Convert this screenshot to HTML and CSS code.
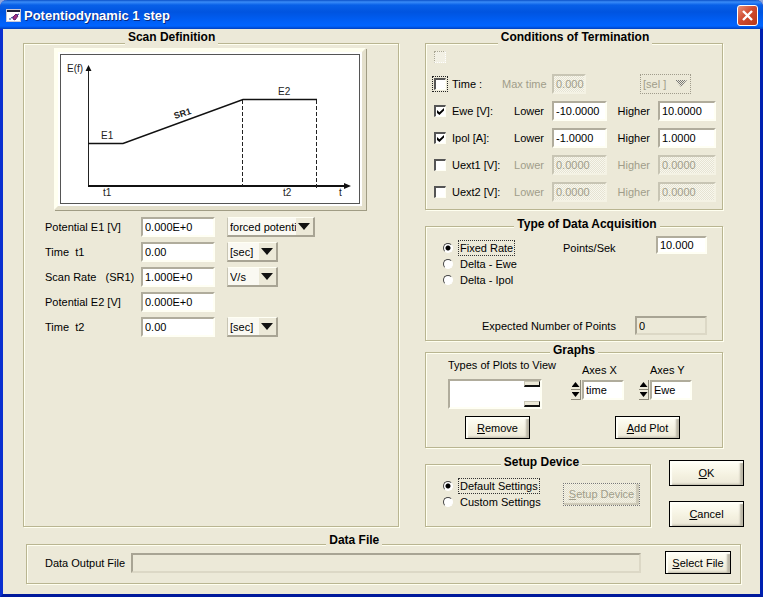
FILE: index.html
```html
<!DOCTYPE html>
<html lang="en">
<head>
  <meta charset="UTF-8">
  <meta name="viewport" content="width=device-width, initial-scale=1.0">
  <title>Potentiodynamic 1 step</title>
  <link rel="stylesheet" href="styles.css">
</head>
<body>
  <div class="window">
    <header class="titlebar">
      <svg class="app-icon" width="16" height="14" viewBox="0 0 16 14">
        <rect x="0.5" y="0.5" width="14" height="12" fill="#fff" stroke="#c8c8d8"/>
        <path d="M1 2h13" stroke="#223" stroke-width="2"/>
        <path d="M7 8l3-3 2 2-3 4-2-1z" fill="#a03080" stroke="#602070"/>
        <path d="M3 10h2M5 9l2-1M11 6l2-1" stroke="#203090"/>
      </svg>
      <h1>Potentiodynamic 1 step</h1>
      <button type="button" class="close" aria-label="Close">
        <svg width="17" height="17" viewBox="0 0 17 17"><path d="M4 4l9 9M13 4l-9 9" stroke="#fff" stroke-width="2.4"/></svg>
      </button>
    </header>

    <form class="content">
      <div class="columns">
        <fieldset class="scan tall-legend">
          <legend>Scan Definition</legend>
          <div class="picture">
            <svg viewBox="0 0 304 154" role="img" aria-label="Scan profile">
              <rect x="2.5" y="2.5" width="299" height="149" fill="#fff" stroke="#555"/>
              <path d="M30.5 17v117" stroke="#222"/>
              <path d="M30 134h256" stroke="#111" stroke-width="2"/>
              <path d="M30.5 13l3 6h-6zM293 134l-7-3v6z" fill="#111"/>
              <path d="M30 91.500H65L185 47.500H259" fill="none" stroke="#111" stroke-width="1.500"/>
              <path d="M184.500 48v86M258.500 48v88" stroke="#222" stroke-dasharray="4 2"/>
              <g font-size="10" fill="#222">
                <text x="9" y="20">E(f)</text>
                <text x="43" y="87">E1</text>
                <text x="220" y="43">E2</text>
                <text x="45" y="144">t1</text>
                <text x="225" y="144">t2</text>
                <text x="281" y="144">t</text>
                <text transform="translate(117 67) rotate(-18)" font-size="9" font-weight="bold">SR1</text>
              </g>
            </svg>
          </div>
          <div class="params">
            <label for="e1">Potential E1 [V]</label>
            <input type="text" id="e1" value="0.000E+0">
            <span class="drop wide"><select aria-label="E1 mode"><option>forced potential</option></select></span>

            <label for="t1">Time  t1</label>
            <input type="text" id="t1" value="0.00">
            <span class="drop"><select aria-label="t1 unit"><option>[sec]</option></select></span>

            <label for="sr1">Scan Rate   (SR1)</label>
            <input type="text" id="sr1" value="1.000E+0">
            <span class="drop"><select aria-label="Scan rate unit"><option>V/s</option></select></span>

            <label for="e2">Potential E2 [V]</label>
            <input type="text" id="e2" value="0.000E+0">
            <span></span>

            <label for="t2">Time  t2</label>
            <input type="text" id="t2" value="0.00">
            <span class="drop"><select aria-label="t2 unit"><option>[sec]</option></select></span>
          </div>
        </fieldset>

        <div class="side">
          <fieldset class="termination tall-legend">
            <legend>Conditions of Termination</legend>
            <div class="conditions">
              <div class="condition">
                <input type="checkbox" aria-label="Unused condition" disabled>
              </div>
              <div class="condition">
                <input type="checkbox" id="useTime" class="focused">
                <label for="useTime">Time :</label>
                <label class="low off" for="maxTime">Max time</label>
                <input type="text" id="maxTime" class="short" value="0.000" disabled>
                <span class="drop unit"><select aria-label="Max time unit" disabled><option>[sel ]</option></select></span>
              </div>
              <div class="condition">
                <input type="checkbox" id="useEwe" checked>
                <label for="useEwe">Ewe [V]:</label>
                <label class="low" for="eweLow">Lower</label>
                <input type="text" id="eweLow" value="-10.0000">
                <label class="high" for="eweHigh">Higher</label>
                <input type="text" id="eweHigh" value="10.0000">
              </div>
              <div class="condition">
                <input type="checkbox" id="useIpol" checked>
                <label for="useIpol">Ipol [A]:</label>
                <label class="low" for="ipolLow">Lower</label>
                <input type="text" id="ipolLow" value="-1.0000">
                <label class="high" for="ipolHigh">Higher</label>
                <input type="text" id="ipolHigh" value="1.0000">
              </div>
              <div class="condition">
                <input type="checkbox" id="useUext1">
                <label for="useUext1">Uext1 [V]:</label>
                <label class="low off" for="uext1Low">Lower</label>
                <input type="text" id="uext1Low" value="0.0000" disabled>
                <label class="high off" for="uext1High">Higher</label>
                <input type="text" id="uext1High" value="0.0000" disabled>
              </div>
              <div class="condition">
                <input type="checkbox" id="useUext2">
                <label for="useUext2">Uext2 [V]:</label>
                <label class="low off" for="uext2Low">Lower</label>
                <input type="text" id="uext2Low" value="0.0000" disabled>
                <label class="high off" for="uext2High">Higher</label>
                <input type="text" id="uext2High" value="0.0000" disabled>
              </div>
            </div>
          </fieldset>

          <fieldset class="acquisition">
            <legend>Type of Data Acquisition</legend>
            <div class="rate">
              <div class="radios">
                <label><input type="radio" name="rate" checked><span class="focused">Fixed Rate</span></label>
                <label><input type="radio" name="rate"><span>Delta - Ewe</span></label>
                <label><input type="radio" name="rate"><span>Delta - Ipol</span></label>
              </div>
              <label class="points" for="points">Points/Sek</label>
              <input type="text" id="points" value="10.000">
            </div>
            <div class="expected">
              <label for="expected">Expected Number of Points</label>
              <input type="text" id="expected" class="readout" value="0" readonly>
            </div>
          </fieldset>

          <fieldset class="graphs">
            <legend>Graphs</legend>
            <div class="plots">
              <div class="plot-list">
                <label for="plots">Types of Plots to View</label>
                <div class="list">
                  <select id="plots" size="2"></select>
                  <span class="scroll"><i></i><i></i></span>
                </div>
              </div>
              <div class="axis">
                <label for="axisX">Axes X</label>
                <div class="spinner">
                  <span class="arrows">
                    <button type="button" aria-label="Previous X axis"></button>
                    <button type="button" class="down" aria-label="Next X axis"></button>
                  </span>
                  <input type="text" id="axisX" value="time">
                </div>
              </div>
              <div class="axis">
                <label for="axisY">Axes Y</label>
                <div class="spinner">
                  <span class="arrows">
                    <button type="button" aria-label="Previous Y axis"></button>
                    <button type="button" class="down" aria-label="Next Y axis"></button>
                  </span>
                  <input type="text" id="axisY" value="Ewe">
                </div>
              </div>
            </div>
            <div class="plot-buttons">
              <button type="button" class="btn"><u>R</u>emove</button>
              <button type="button" class="btn"><u>A</u>dd Plot</button>
            </div>
          </fieldset>

          <div class="bottom">
            <fieldset class="device">
              <legend>Setup Device</legend>
              <div class="device-row">
                <div class="radios">
                  <label><input type="radio" name="settings" checked><span class="focused">Default Settings</span></label>
                  <label><input type="radio" name="settings"><span>Custom Settings</span></label>
                </div>
                <button type="button" class="btn" disabled><u>S</u>etup Device</button>
              </div>
            </fieldset>
            <div class="actions">
              <button type="submit" class="btn"><u>O</u>K</button>
              <button type="button" class="btn"><u>C</u>ancel</button>
            </div>
          </div>
        </div>
      </div>

      <fieldset class="datafile">
        <legend>Data File</legend>
        <div class="file-row">
          <label for="outfile">Data Output File</label>
          <input type="text" id="outfile" class="readout" readonly>
          <button type="button" class="btn"><u>S</u>elect File</button>
        </div>
      </fieldset>
    </form>
  </div>
</body>
</html>
```
FILE: styles.css
```css
* { margin:0; padding:0; box-sizing:border-box }
body {
  background:#8fa6dc; color:#000;
  font:11px/14px "Liberation Sans", Arial, sans-serif;
}
input, select, button { font:inherit; color:inherit; border-radius:0; }
label { white-space:pre; }

.window {
  min-height:100vh;
  display:flex; flex-direction:column;
  background:#ece9d8;
  border:3px solid #0a2fd0; border-top:none; border-bottom-color:#001a9c; border-right-color:#0020b0;
  border-radius:7px 7px 0 0;
}

/* title bar */
.titlebar {
  height:29px; margin:0 -3px; padding:2px 5px 0 6px;
  display:flex; align-items:center; gap:2px;
  border-radius:7px 7px 0 0;
  background:linear-gradient(#0a50c8 0, #3a8cf8 2px, #0860e8 5px, #0054e0 12px, #0060f8 22px, #0064ff 26px, #0040c0 29px);
}
.titlebar h1 {
  flex:1; color:#fff; font-size:13px; line-height:16px;
  text-shadow:1px 1px 0 #0a2a80;
}
.close {
  width:21px; height:21px; display:grid; place-items:center;
  border:1px solid #fff; border-radius:3px;
  background:linear-gradient(135deg, #e89078, #d04c30 45%, #b83818);
}

.content { flex:1; padding:1px 16px 9px 20px; }
.columns { display:grid; grid-template-columns:376fr 319fr; gap:26px; }
.side { display:flex; flex-direction:column; min-width:0; }

/* group boxes */
fieldset {
  min-width:0; border:1px solid #b9b591;
  box-shadow:inset 1px 1px 0 #fffff0, 1px 1px 0 #fffff0;
}
legend {
  margin:0 auto; padding:0 3px 4px;
  background:#ece9d8; font-size:12px; line-height:14px; font-weight:bold;
}
.tall-legend legend { padding-bottom:12px; }

/* fields */
input[type=text] {
  width:100%; min-width:0; height:20px; padding:0 0 0 2px;
  background:#fff; outline:none;
  border:2px solid #fffff4; border-top-color:#b0ac9c; border-left-color:#b0ac9c;
}
input[type=text]:disabled {
  color:#a09d8a; border-color:#f4f2e4; border-top-color:#c8c5b4; border-left-color:#c8c5b4;
  background:repeating-conic-gradient(#f8f7ee 0 25%, #e6e3d2 0 50%) 0 0 / 2px 2px;
}
input.readout, input.readout[type=text] {
  background:#ece9d8; border-color:#dcd8c6; border-top-color:#a8a494; border-left-color:#a8a494;
}
.off { color:#a09d8a; }

.drop {
  position:relative; display:block; width:51px; height:20px;
  border:2px solid #a8a494; border-top:1px solid #fffff4; border-left:1px solid #c8c5b4;
}
.drop.wide { width:88px; }
.drop select {
  width:100%; height:100%; display:block; padding:0 17px 0 2px; appearance:none; border:none;
  background:linear-gradient(90deg, #faf9f2 calc(100% - 17px), #ece9d8 0);
  overflow:hidden; text-overflow:clip;
}
.drop::after {
  content:""; position:absolute; right:3px; top:5px; width:12px; height:7px;
  background:#111; clip-path:polygon(0 0, 100% 0, 50% 100%); pointer-events:none;
}
.drop select:disabled { color:#a09d8a; opacity:1; background:#ece9d8; }
.drop:has(select:disabled) { border:1px dotted #a09c8c; }
.drop:has(select:disabled)::after { background:repeating-conic-gradient(#777 0 25%, #ece9d8 0 50%) 0 0 / 2px 2px; }

input[type=checkbox] {
  width:12px; height:12px; appearance:none; background:#fff;
  border:1px solid #fffff4; border-top:2px solid #555; border-left:2px solid #555;
  display:grid; place-items:center;
}
input[type=checkbox]:checked::after {
  content:""; width:7px; height:7px; background:#000;
  clip-path:polygon(0 30%, 35% 60%, 100% 0, 100% 35%, 35% 100%, 0 70%);
}
input[type=checkbox]:disabled { background:#f2f0e4; border:1px dotted #aaa794; border-right-color:#fff; border-bottom-color:#fff; }
input[type=checkbox].focused { outline:1px dotted #222; outline-offset:1px; }

.radios { display:flex; flex-direction:column; align-items:flex-start; }
.radios label { height:16px; display:flex; align-items:center; gap:6px; }
.radios span { padding:0 1px; }
.radios .focused { outline:1px dotted #333; }
input[type=radio] {
  width:10px; height:10px; appearance:none; border-radius:50%; background:#fff;
  border:1px solid #fff; border-top-color:#444; border-left-color:#444;
}
input[type=radio]:checked { background:radial-gradient(#000 2px, #fff 3px); }

.btn {
  height:23px; border:1px solid #000; background:linear-gradient(#fffff6, #f4f1e0 60%, #ece8d8);
  box-shadow:inset 2px 2px 1px #fffff8, inset -3px -1px 2px #bab6a6;
}
.btn:disabled {
  color:#a09d8a; border:1px dotted #777;
  background:repeating-conic-gradient(#f4f2e4 0 25%, #e4e1d0 0 50%) 0 0 / 2px 2px;
  box-shadow:inset -3px -2px 1px #ccc8b6;
}

/* scan definition */
.scan { padding:0 20px 0 21px; }
.scan legend { margin-left:24%; }
.picture {
  max-width:312px; margin:-8px 0 7px 9px; background:#fff;
  border:4px solid #fffff0; border-right-color:#e4e0cc; border-bottom-color:#e4e0cc;
  box-shadow:1px 1px 0 #a09c84;
}
.picture svg { display:block; width:100%; }
.params {
  display:grid; grid-template-columns:84px 74px auto; align-items:center;
  gap:5px 12px; grid-auto-rows:20px;
}

/* conditions */
.termination { margin-right:21px; padding:0 6px 7px 8px; }
.conditions { display:grid; gap:7px; margin-top:-9px; }
.condition {
  height:20px; display:grid; align-items:center;
  grid-template-columns:18px 50px 50px 55px 51px 1fr;
}
.condition .low { text-align:right; padding-right:8px; }
.condition .high { text-align:right; padding-right:8px; }
.condition .short { width:34px; }
.condition .unit { margin-left:33px; }

/* data acquisition */
.acquisition { margin:7px 21px 0 0; padding:1px 15px 5px 17px; }
.acquisition legend { margin-left:27%; }
.rate { display:grid; grid-template-columns:120px 93px 1fr; align-items:start; }
.rate .radios { padding-top:4px; }
.rate .points { padding-top:4px; line-height:16px; }
.rate input[type=text] { height:18px; }
.expected { display:grid; grid-template-columns:153px 1fr; align-items:center; margin-top:28px; padding-left:39px; }
.expected input[type=text] { height:19px; }

/* graphs */
.graphs { margin:2px 21px 0 0; padding:0 22px 8px 22px; }
.plots { display:grid; grid-template-columns:123px 68px 1fr; align-items:start; }
.plot-list { margin-top:-3px; }
.list {
  position:relative; width:94px; height:30px; margin-top:7px;
  border:2px solid #fffff4; border-top-color:#b0ac9c; border-left-color:#b0ac9c;
}
.list select { display:block; width:100%; height:100%; appearance:none; border:none; background:#fff; }
.scroll {
  position:absolute; top:0; right:0; bottom:0; width:16px;
  display:flex; flex-direction:column; justify-content:space-between;
}
.scroll i { height:6px; background:#ece9d8; border:1px solid #c8c5b4; border-bottom:2px solid #111; border-right-color:#111; }
.axis { margin-top:2px; }
.axis label { display:block; padding-left:11px; }
.spinner { display:flex; gap:1px; margin-top:3px; }
.spinner input[type=text] { width:42px; }
.arrows { display:flex; flex-direction:column; }
.arrows button {
  width:10px; height:10px; display:grid; place-items:center;
  background:#ece9d8; border:none; border-right:1px solid #8c8878; border-bottom:1px solid #8c8878;
}
.arrows button::after { content:""; width:8px; height:5px; background:#000; clip-path:polygon(50% 0, 100% 100%, 0 100%); }
.arrows .down::after { clip-path:polygon(0 0, 100% 0, 50% 100%); }
.plot-buttons { display:flex; justify-content:space-between; margin-top:7px; padding:0 20px 0 17px; }
.plot-buttons .btn { width:65px; }

/* setup device, ok and cancel */
.bottom { display:flex; gap:18px; margin-top:7px; }
.device { flex:1; padding:5px 10px 16px 17px; }
.device-row { display:flex; justify-content:space-between; align-items:center; }
.device .btn { width:77px; }
.actions { width:75px; display:flex; flex-direction:column; justify-content:space-between; padding-top:5px; }
.actions .btn { height:26px; }

/* data file */
.datafile { margin:6px 3px 0; padding:0 9px 9px 18px; }
.datafile legend { margin-left:41%; padding-bottom:8px; }
.file-row { display:grid; grid-template-columns:86px 1fr auto; align-items:center; margin-top:-4px; }
.file-row .btn { width:66px; margin-left:24px; }
```
